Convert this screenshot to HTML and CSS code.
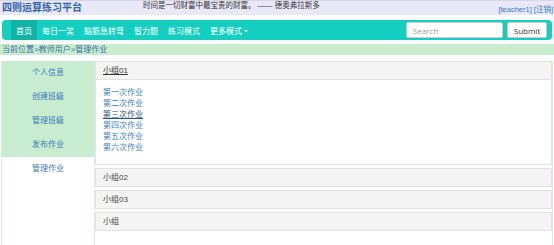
FILE: index.html
```html
<!DOCTYPE html>
<html>
<head>
  <title>四则运算练习平台</title>
  <link rel="stylesheet" href="styles.css">
</head>
<body>
  <div class="header">
    <div class="logo">四则运算练习平台</div>
    <div class="motto">时间是一切财富中最宝贵的财富。 —— 德奥弗拉斯多</div>
    <div class="user"><a href="#">[teacher1]</a> <a href="#">[注销]</a></div>
  </div>

  <div class="navbar">
    <ul class="nav">
      <li class="active"><a href="#">首页</a></li>
      <li><a href="#">每日一笑</a></li>
      <li><a href="#">脑筋急转弯</a></li>
      <li><a href="#">智力题</a></li>
      <li><a href="#">练习模式</a></li>
      <li><a href="#">更多模式<span class="caret"></span></a></li>
    </ul>
    <form class="search">
      <input type="text" placeholder="Search">
      <button type="button">Submit</button>
    </form>
  </div>

  <div class="crumb">当前位置&gt;教师用户&gt;管理作业</div>

  <div class="main">
    <div class="sidebar">
      <ul class="menu">
        <li><a href="#">个人信息</a></li>
        <li><a href="#">创建班级</a></li>
        <li><a href="#">管理班级</a></li>
        <li><a href="#">发布作业</a></li>
      </ul>
      <div class="menu-current"><a href="#">管理作业</a></div>
    </div>

    <div class="content">
      <div class="panel">
        <div class="panel-heading"><a href="#">小组01</a></div>
        <div class="panel-body">
          <a href="#">第一次作业</a>
          <a href="#">第二次作业</a>
          <a href="#" class="hover">第三次作业</a>
          <a href="#">第四次作业</a>
          <a href="#">第五次作业</a>
          <a href="#">第六次作业</a>
        </div>
      </div>
      <div class="panel">
        <div class="panel-heading">小组02</div>
      </div>
      <div class="panel">
        <div class="panel-heading">小组03</div>
      </div>
      <div class="panel">
        <div class="panel-heading">小组</div>
      </div>
    </div>
  </div>
</body>
</html>
```

FILE: styles.css
```css
body {
  margin: 0;
  padding: 0;
  font-family: "Liberation Sans", "Noto Sans CJK SC", sans-serif;
  font-size: 8px;
  color: #333;
  background: #fff;
}

a {
  text-decoration: none;
}

.header {
  height: 15px;
  background: #e8e8f8;
  border-top: 1px solid #d6d6e2;
  box-sizing: border-box;
  display: flex;
  align-items: flex-start;
}

.logo {
  width: 141px;
  padding-left: 2px;
  font-size: 10px;
  font-weight: bold;
  color: #2f62ac;
  line-height: 13px;
}

.motto {
  flex: 1;
  font-size: 7.5px;
  line-height: 10px;
  color: #333;
  white-space: nowrap;
}

.user {
  align-self: flex-end;
  padding-right: 1px;
  font-size: 7.5px;
  line-height: 10px;
}

.user a {
  color: #3a78c2;
}

.navbar {
  margin: 5px 2px 0;
  height: 20px;
  background: #14cfbf;
  border-radius: 4px;
  display: flex;
  align-items: center;
  padding: 0 5px 0 9px;
}

.nav {
  list-style: none;
  margin: 0;
  padding: 0;
  display: flex;
  height: 100%;
  flex: 1;
}

.nav li {
  display: flex;
  align-items: center;
  padding: 0 5px;
}

.nav li a {
  color: #fff;
  font-size: 8px;
}

.nav li.active {
  background: #10b3a6;
}

.caret {
  display: inline-block;
  margin-left: 2px;
  vertical-align: middle;
  border-top: 2px solid #fff;
  border-left: 2px solid transparent;
  border-right: 2px solid transparent;
}

.search {
  display: flex;
  gap: 4px;
}

.search input {
  width: 97px;
  height: 16px;
  box-sizing: border-box;
  border: 1px solid #ccc;
  border-radius: 2px;
  padding: 0 6px;
  font-family: "Open Sans", sans-serif;
  font-size: 8px;
  outline: none;
}

.search input::placeholder {
  color: #999;
}

.search button {
  width: 40px;
  height: 16px;
  box-sizing: border-box;
  padding: 0;
  border: 1px solid #ccc;
  border-radius: 2px;
  background: #fff;
  font-family: "Open Sans", sans-serif;
  font-size: 8px;
  color: #333;
}

.crumb {
  margin-top: 4px;
  height: 11px;
  line-height: 11px;
  background: #c8eecf;
  padding-left: 2px;
  color: #3a6ea5;
}

.main {
  margin: 6px 1px 0;
  height: 184px;
  display: flex;
  border-left: 1px solid #d4f0d9;
  border-right: 1px solid #d4f0d9;
}

.sidebar {
  width: 92px;
  border-right: 1px solid #d4f0d9;
}

.menu {
  list-style: none;
  margin: 0;
  padding: 0;
  background: #c8ecd0;
}

.menu li,
.menu-current {
  height: 24px;
  line-height: 24px;
  text-align: center;
}

.menu li a,
.menu-current a {
  color: #3a78b8;
}

.content {
  flex: 1;
}

.panel {
  margin-top: 3px;
}

.panel:first-child {
  margin-top: 0;
}

.panel-heading {
  height: 19px;
  line-height: 17px;
  box-sizing: border-box;
  background: #f4f4f4;
  border: 1px solid #e2e2e2;
  padding-left: 7px;
  color: #444;
}

.panel-heading a {
  color: #333;
  text-decoration: underline;
}

.panel-body {
  height: 85px;
  box-sizing: border-box;
  padding: 7px 0 12px 7px;
  border: 1px solid #e2e2e2;
  border-top: none;
  display: flex;
  flex-direction: column;
  align-items: flex-start;
}

.panel-body a {
  line-height: 11px;
  color: #3a7cc4;
}

.panel-body a.hover {
  color: #23527c;
  text-decoration: underline;
}
```
